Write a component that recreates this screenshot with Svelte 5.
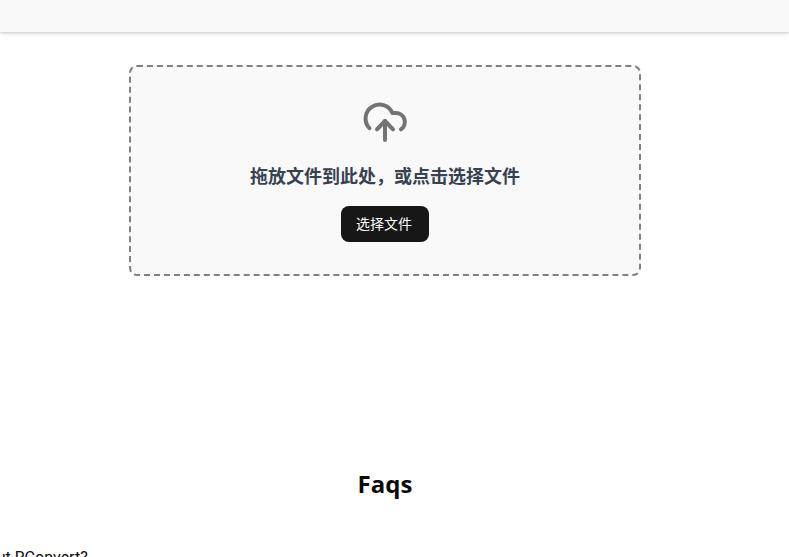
<script>
  const title = '拖放文件到此处\uFF0C或点击选择文件';
</script>

<div class="page">
  <header class="topbar"></header>
  <main class="main">
    <section class="drop">
      <svg class="cloud" viewBox="0 0 24 24" fill="none" stroke="currentColor" stroke-width="2" stroke-linecap="round" stroke-linejoin="round" aria-hidden="true">
        <path d="M4.2 15.6A7 7 0 1 1 15.7 8h1.8a4.5 4.5 0 0 1 2.5 8.2" />
        <path d="M12 12v9.5" />
        <path d="m8 16.2 4-4.2 4 4.2" />
      </svg>
      <h3 class="title">{title}</h3>
      <button class="btn" type="button">选择文件</button>
    </section>
    <h2 class="faqs">Faqs</h2>
    <p class="question">What about RConvert?</p>
  </main>
</div>

<style>
  :global(body) {
    margin: 0;
    background: #fff;
    overflow: hidden;
  }
  .page {
    width: 789px;
    height: 557px;
    overflow: hidden;
    font-family: "Open Sans", "Noto Sans CJK SC", sans-serif;
  }
  .topbar {
    height: 32px;
    background: #f9f9f9;
    box-shadow: 0 1px 3px rgba(0, 0, 0, 0.2), 0 2px 8px rgba(0, 0, 0, 0.05);
  }
  .main {
    width: 770px;
    display: flex;
    flex-direction: column;
    padding-top: 33px;
  }
  .drop {
    box-sizing: border-box;
    width: 512px;
    height: 211px;
    margin-left: 129px;
    border: 2px dashed #808080;
    border-radius: 8px;
    background: #f9f9f9;
    display: flex;
    flex-direction: column;
    align-items: center;
  }
  .cloud {
    width: 48px;
    height: 48px;
    margin-top: 30px;
    color: #737373;
  }
  .title {
    margin: 18px 0 0;
    font-size: 18px;
    line-height: 24px;
    font-weight: 700;
    color: #374151;
    font-family: "Noto Sans CJK SC", sans-serif;
  }
  .btn {
    box-sizing: border-box;
    margin-top: 19px;
    width: 88px;
    height: 36px;
    padding: 0 2px 2px 0;
    border: 0;
    border-radius: 8px;
    background: #171717;
    color: #fff;
    font-size: 14px;
    font-family: "Noto Sans CJK SC", sans-serif;
  }
  .faqs {
    margin: 192px 0 0;
    text-align: center;
    font-size: 24px;
    line-height: 32px;
    font-weight: 700;
    color: #0a0a0a;
  }
  .question {
    margin: 46px 0 0 -71px;
    font-family: Roboto, sans-serif;
    font-size: 16px;
    line-height: 24px;
    color: #0a0a0a;
    white-space: nowrap;
  }
</style>
